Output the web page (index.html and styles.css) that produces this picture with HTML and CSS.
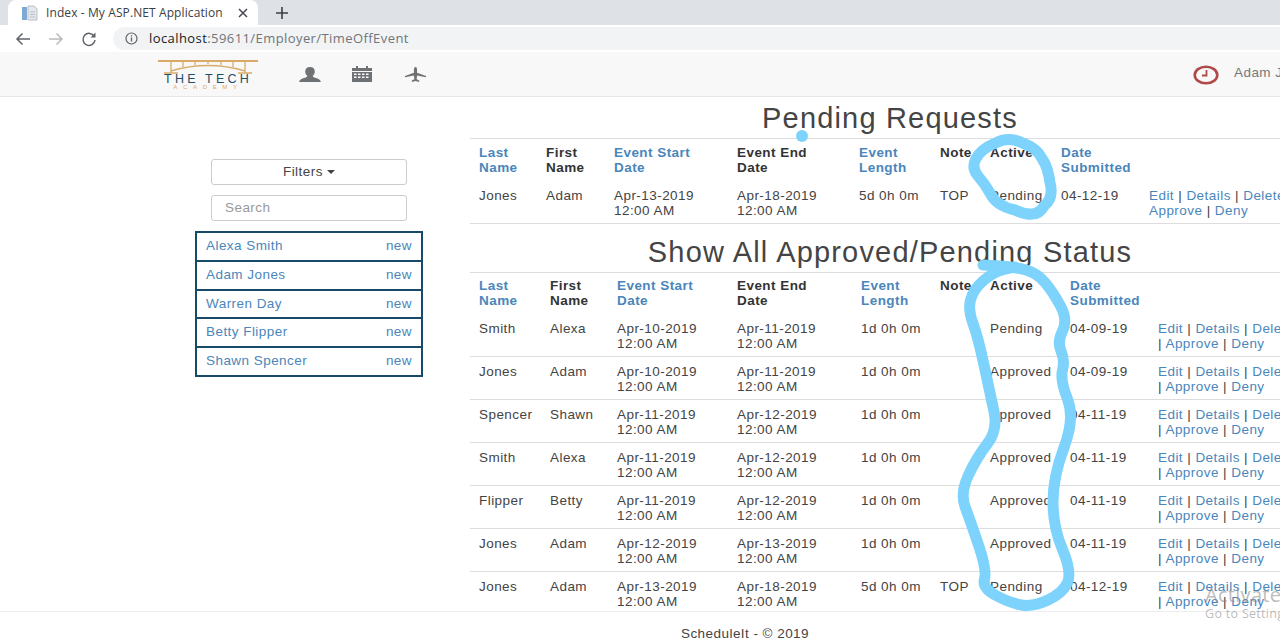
FILE: index.html
```html
<!DOCTYPE html>
<html lang="en">
<head>
  <meta charset="UTF-8">
  <title>Index - My ASP.NET Application</title>
  <link rel="stylesheet" href="styles.css">
</head>
<body>
  <div class="tabstrip">
    <div class="tab">
      <svg class="tab-icon" width="16" height="16" viewBox="0 0 16 16">
        <rect x="0" y="2" width="5" height="13" fill="#7fa9d3"/>
        <path d="M6 1h6l3 3v11H6z" fill="#e4e7ec" stroke="#b9bec6"/>
        <path d="M8 7h5M8 9.500h5M8 12h5" stroke="#b9bec6"/>
      </svg>
      <span class="tab-title">Index - My ASP.NET Application</span>
      <svg class="tab-close" width="10" height="10" viewBox="0 0 10 10">
        <path d="M1 1l8 8M9 1l-8 8" stroke="#45484d" stroke-width="1.500"/>
      </svg>
    </div>
    <svg class="tab-new" width="12" height="12" viewBox="0 0 12 12">
      <path d="M6 0v12M0 6h12" stroke="#3c4043" stroke-width="1.600"/>
    </svg>
  </div>

  <div class="toolbar">
    <svg class="nav-btn" width="16" height="16" viewBox="0 0 16 16">
      <path d="M15 8H2M7.500 2.500L2 8l5.500 5.500" fill="none" stroke="#5f6368" stroke-width="1.500"/>
    </svg>
    <svg class="nav-btn" width="16" height="16" viewBox="0 0 16 16">
      <path d="M1 8h13M8.500 2.500L14 8l-5.500 5.500" fill="none" stroke="#b8babd" stroke-width="1.500"/>
    </svg>
    <svg class="nav-btn" width="16" height="16" viewBox="0 0 16 16">
      <path d="M13.300 5.500A6 6 0 1 0 14 9" fill="none" stroke="#5f6368" stroke-width="1.500"/>
      <path d="M14.500 1.500v5h-5z" fill="#5f6368"/>
    </svg>
    <div class="omnibox">
      <svg class="info-icon" width="13" height="13" viewBox="0 0 13 13">
        <circle cx="6.500" cy="6.500" r="5.500" fill="none" stroke="#5f6368" stroke-width="1.200"/>
        <path d="M6.500 5.500v4M6.500 3.200v1.200" stroke="#5f6368" stroke-width="1.300"/>
      </svg>
      <span class="url"><span class="url-host">localhost</span>:59611/Employer/TimeOffEvent</span>
    </div>
  </div>

  <nav class="navbar">
    <div class="logo">
      <svg class="logo-bridge" width="100" height="14" viewBox="0 0 100 14">
        <path d="M0 1h100" stroke="#d8ab6b" stroke-width="2"/>
        <path d="M13 1v12M25 1v6M37 1v4M50 1v3M63 1v4M75 1v6M87 1v12M6 13h14M80 13h14" stroke="#d8ab6b" stroke-width="1.300" fill="none"/>
        <path d="M13 11Q50 0 87 11" stroke="#d8ab6b" stroke-width="1.600" fill="none"/>
      </svg>
      <div class="logo-name">THE TECH</div>
      <div class="logo-sub">ACADEMY</div>
    </div>
    <svg class="nav-icon icon-user" width="22" height="15" viewBox="0 0 22 17" preserveAspectRatio="none">
      <path d="M11 0c3.200 0 4.800 2.300 4.800 5 0 2.300-1.100 4-2.200 5 .1 1 .7 1.500 2.400 2.100 2.500.8 5.500 1.700 5.800 4.900H.2c.3-3.200 3.300-4.100 5.800-4.900 1.700-.6 2.300-1.100 2.400-2.100C7.300 9 6.200 7.300 6.200 5 6.200 2.300 7.800 0 11 0z" fill="#6f7275"/>
    </svg>
    <svg class="nav-icon icon-cal" width="20" height="16" viewBox="0 0 20 16">
      <path d="M0 2h4V0h2v2h8V0h2v2h4v3H0z" fill="#6f7275"/>
      <path d="M0 6h20v10H0zM2 7.500v1.500h2.500V7.500zM6 7.500v1.500h2.500V7.500zM10 7.500v1.500h2.500V7.500zM14 7.500v1.500h2.500V7.500zM2 10.500V12h2.500v-1.500zM6 10.500V12h2.500v-1.500zM10 10.500V12h2.500v-1.500zM14 10.500V12h2.500v-1.500z" fill="#6f7275" fill-rule="evenodd"/>
    </svg>
    <svg class="nav-icon icon-plane" width="21" height="15" viewBox="0 0 20 16" preserveAspectRatio="none">
      <path d="M10 0c1 0 1.500 1.300 1.500 3v3l8.500 3.500v1.500l-8.500-2-.4 4 2.400 1.500V16L10 15l-3.500 1v-1.500L8.900 13l-.4-4L0 11V9.500L8.500 6V3c0-1.700.5-3 1.500-3z" fill="#6f7275"/>
    </svg>
    <svg class="clock" width="26" height="20" viewBox="0 0 26 20">
      <ellipse cx="13" cy="10" rx="11.300" ry="8.300" fill="none" stroke="#b04a4a" stroke-width="2.600"/>
      <path d="M13.500 5v5.500H9" fill="none" stroke="#b04a4a" stroke-width="1.800"/>
    </svg>
    <span class="user-name">Adam Jones</span>
  </nav>

  <main class="main">
    <aside class="sidebar">
      <button class="filter-btn">Filters <span class="caret"></span></button>
      <input class="search" type="text" placeholder="Search">
      <ul class="people">
        <li><a>Alexa Smith</a><a>new</a></li>
        <li><a>Adam Jones</a><a>new</a></li>
        <li><a>Warren Day</a><a>new</a></li>
        <li><a>Betty Flipper</a><a>new</a></li>
        <li><a>Shawn Spencer</a><a>new</a></li>
      </ul>
    </aside>

    <section class="content">
      <h2 class="title title-first">Pending Requests</h2>
      <table class="grid grid-pending">
        <colgroup>
          <col class="c67"><col class="c68"><col class="c123"><col class="c122"><col class="c81"><col class="c50"><col class="c71"><col class="c88"><col>
        </colgroup>
        <tr>
          <th><a>Last Name</a></th><th>First Name</th><th><a>Event Start Date</a></th><th>Event End<br>Date</th>
          <th><a>Event Length</a></th><th>Note</th><th>Active</th><th><a>Date Submitted</a></th><th></th>
        </tr>
        <tr>
          <td>Jones</td><td>Adam</td><td>Apr-13-2019<br>12:00 AM</td><td>Apr-18-2019<br>12:00 AM</td>
          <td>5d 0h 0m</td><td>TOP</td><td>Pending</td><td>04-12-19</td>
          <td><a>Edit</a> | <a>Details</a> | <a>Delete</a> |<br><a>Approve</a> | <a>Deny</a></td>
        </tr>
      </table>

      <h2 class="title">Show All Approved/Pending Status</h2>
      <table class="grid grid-all">
        <colgroup>
          <col class="c71"><col class="c67"><col class="c120"><col class="c124"><col class="c79"><col class="c50"><col class="c80"><col class="c88"><col>
        </colgroup>
        <tr>
          <th><a>Last Name</a></th><th>First Name</th><th><a>Event Start Date</a></th><th>Event End<br>Date</th>
          <th><a>Event Length</a></th><th>Note</th><th>Active</th><th><a>Date Submitted</a></th><th></th>
        </tr>
        <tr>
          <td>Smith</td><td>Alexa</td><td>Apr-10-2019<br>12:00 AM</td><td>Apr-11-2019<br>12:00 AM</td>
          <td>1d 0h 0m</td><td></td><td>Pending</td><td>04-09-19</td>
          <td><a>Edit</a> | <a>Details</a> | <a>Delete</a><br>| <a>Approve</a> | <a>Deny</a></td>
        </tr>
        <tr>
          <td>Jones</td><td>Adam</td><td>Apr-10-2019<br>12:00 AM</td><td>Apr-11-2019<br>12:00 AM</td>
          <td>1d 0h 0m</td><td></td><td>Approved</td><td>04-09-19</td>
          <td><a>Edit</a> | <a>Details</a> | <a>Delete</a><br>| <a>Approve</a> | <a>Deny</a></td>
        </tr>
        <tr>
          <td>Spencer</td><td>Shawn</td><td>Apr-11-2019<br>12:00 AM</td><td>Apr-12-2019<br>12:00 AM</td>
          <td>1d 0h 0m</td><td></td><td>Approved</td><td>04-11-19</td>
          <td><a>Edit</a> | <a>Details</a> | <a>Delete</a><br>| <a>Approve</a> | <a>Deny</a></td>
        </tr>
        <tr>
          <td>Smith</td><td>Alexa</td><td>Apr-11-2019<br>12:00 AM</td><td>Apr-12-2019<br>12:00 AM</td>
          <td>1d 0h 0m</td><td></td><td>Approved</td><td>04-11-19</td>
          <td><a>Edit</a> | <a>Details</a> | <a>Delete</a><br>| <a>Approve</a> | <a>Deny</a></td>
        </tr>
        <tr>
          <td>Flipper</td><td>Betty</td><td>Apr-11-2019<br>12:00 AM</td><td>Apr-12-2019<br>12:00 AM</td>
          <td>1d 0h 0m</td><td></td><td>Approved</td><td>04-11-19</td>
          <td><a>Edit</a> | <a>Details</a> | <a>Delete</a><br>| <a>Approve</a> | <a>Deny</a></td>
        </tr>
        <tr>
          <td>Jones</td><td>Adam</td><td>Apr-12-2019<br>12:00 AM</td><td>Apr-13-2019<br>12:00 AM</td>
          <td>1d 0h 0m</td><td></td><td>Approved</td><td>04-11-19</td>
          <td><a>Edit</a> | <a>Details</a> | <a>Delete</a><br>| <a>Approve</a> | <a>Deny</a></td>
        </tr>
        <tr>
          <td>Jones</td><td>Adam</td><td>Apr-13-2019<br>12:00 AM</td><td>Apr-18-2019<br>12:00 AM</td>
          <td>5d 0h 0m</td><td>TOP</td><td>Pending</td><td>04-12-19</td>
          <td><a>Edit</a> | <a>Details</a> | <a>Delete</a><br>| <a>Approve</a> | <a>Deny</a></td>
        </tr>
      </table>
    </section>
  </main>

  <footer class="footer">ScheduleIt - © 2019</footer>

  <!-- marker drawn over the screenshot -->
  <svg class="scribble" width="1280" height="640" viewBox="0 0 1280 640">
    <circle cx="802" cy="136" r="6" fill="#7dd3fc"/>
    <path class="stroke" d="M995.500 143Q981 149 976 158.500Q971 168 978 176Q985 184 990 193Q996 206 1015 210Q1037 220 1044 206Q1054 198 1050 182.500Q1048 167 1042 158.500Q1037 148 1022.500 143Q1008 136 995.500 143"/>
    <path class="stroke" d="M983 265L999 266Q1015 267 1026 270Q1037 273 1045 282.500Q1053 292 1060.500 306Q1068 320 1062.500 331Q1057 342 1061 351Q1065 360 1062.500 370Q1060 380 1067.500 399Q1075 418 1064 447.500Q1053 477 1053 502Q1053 527 1062.500 549.500Q1072 572 1067.500 582.500Q1063 593 1048 600Q1033 607 1021.500 605Q1010 603 996 595.500Q982 588 984.500 579Q987 570 978.500 545Q970 520 965 506.500Q960 493 968.500 475Q977 457 987.500 443.500Q998 430 994 411.500Q990 393 984 365Q978 337 973 323.500Q968 310 970.500 300Q973 290 983 281Q993 272 1004 269.500L1015 267"/>
  </svg>

  <div class="watermark">
    <div class="wm-big">Activate Windows</div>
    <div class="wm-small">Go to Settings to activate Windows.</div>
  </div>
</body>
</html>
```

FILE: styles.css
```css
html, body { margin: 0; height: 640px; overflow: hidden; }
body {
  position: relative;
  width: 1280px;
  background: #fff;
  color: #444;
  font-family: "Liberation Sans", Arial, sans-serif;
  font-size: 13.5px;
  line-height: 15px;
  letter-spacing: .45px;
}
a { color: #4a86bb; }

/* browser chrome */
.tabstrip {
  display: flex;
  align-items: center;
  height: 25px;
  background: #dee1e6;
}
.tab {
  display: flex;
  align-items: center;
  flex: none;
  width: 250px;
  height: 25px;
  margin-left: 8px;
  background: #fff;
  border-radius: 8px 8px 0 0;
  box-sizing: border-box;
  padding: 0 10px 0 14px;
}
.tab-icon { flex: none; }
.tab-title {
  margin-left: 8px;
  color: #3c4043;
  font-family: "Open Sans", sans-serif;
  font-size: 12px;
  letter-spacing: .1px;
  white-space: nowrap;
}
.tab-close { flex: none; margin-left: auto; }
.tab-new { flex: none; margin-left: 18px; }
.toolbar {
  display: flex;
  align-items: center;
  height: 27px;
  background: #fff;
  padding-left: 15px;
}
.nav-btn { flex: none; margin-right: 17px; }
.omnibox {
  display: flex;
  align-items: center;
  flex: 1;
  height: 23px;
  margin-left: -1px;
  padding-left: 12px;
  background: #f1f3f4;
  border-radius: 12px 0 0 12px;
}
.url {
  margin-left: 11px;
  color: #70757a;
  font-family: "Open Sans", sans-serif;
  font-size: 13px;
  letter-spacing: .42px;
}
.url-host { color: #202124; }

/* site navbar */
.navbar {
  display: flex;
  align-items: center;
  height: 44px;
  background: #f8f8f8;
  border-bottom: 1px solid #e7e7e7;
  padding-left: 158px;
}
.logo { flex: none; width: 100px; margin-top: 3px; text-align: center; }
.logo-bridge { display: block; }
.logo-name {
  color: #1d4f6b;
  font-size: 12.500px;
  line-height: 11px;
  letter-spacing: 3.200px;
  white-space: nowrap;
}
.logo-sub {
  margin-top: -1px;
  color: #d8ab6b;
  font-size: 6px;
  line-height: 7px;
  letter-spacing: 5.700px;
}
.nav-icon { flex: none; margin-top: 0; }
.icon-user { margin-left: 41px; }
.icon-cal { margin-left: 31px; }
.icon-plane { margin-left: 33px; }
.clock { flex: none; margin-left: 767px; margin-top: 2px; }
.user-name {
  margin-left: 15px;
  margin-top: -4px;
  color: #777;
  white-space: nowrap;
}

/* page */
.main { display: flex; height: 514px; overflow: hidden; }
.sidebar {
  box-sizing: border-box;
  flex: 0 0 470px;
  padding: 62px 47px 0 195px;
}
.filter-btn, .search {
  display: block;
  box-sizing: border-box;
  width: 196px;
  height: 26px;
  margin: 0 16px 10px;
  background: #fff;
  border: 1px solid #ccc;
  border-radius: 3px;
  font: inherit;
  letter-spacing: inherit;
}
.filter-btn { color: #444; padding: 0 0 2px; }
.search { padding: 0 13px 2px; }
.search::placeholder { color: #999; }
.caret {
  display: inline-block;
  vertical-align: middle;
  border-top: 4px solid #444;
  border-left: 4px solid transparent;
  border-right: 4px solid transparent;
}
.people {
  margin: 0;
  padding: 0;
  list-style: none;
  border: 2px solid #164a68;
  border-bottom: 0;
}
.people li {
  display: flex;
  justify-content: space-between;
  height: 28.750px;
  padding: 5px 9px 0;
  box-sizing: border-box;
  border-bottom: 2px solid #164a68;
}

.content { flex: 0 0 840px; }
.title {
  margin: 0;
  padding-top: 8px;
  height: 39px;
  box-sizing: border-box;
  font-size: 29px;
  font-weight: 400;
  line-height: 26px;
  letter-spacing: 1.180px;
  text-align: center;
}
.title-first { height: 41px; padding-top: 8px; }
.grid + .title { height: 48px; padding-top: 15px; }
.grid {
  width: 840px;
  table-layout: fixed;
  border-collapse: collapse;
  border-top: 1px solid #ddd;
}
.c50 { width: 50px; }
.c67 { width: 67px; }
.c68 { width: 68px; }
.c71 { width: 71px; }
.c79 { width: 79px; }
.c80 { width: 80px; }
.c81 { width: 81px; }
.c88 { width: 88px; }
.c120 { width: 120px; }
.c122 { width: 122px; }
.c123 { width: 123px; }
.c124 { width: 124px; }
.grid th {
  padding: 6px 9px 5px;
  color: #333;
  font-weight: 700;
  text-align: left;
  vertical-align: top;
}
.grid td {
  padding: 7px 9px 5px;
  vertical-align: top;
  border-bottom: 1px solid #ddd;
  white-space: nowrap;
}
.grid-pending td { padding-top: 8px; }
.grid-all th { padding: 5px 9px 6px; }

.footer {
  box-sizing: border-box;
  height: 29px;
  padding: 14px 0 0 210px;
  border-top: 1px solid #eee;
  text-align: center;
}

/* overlays */
.scribble { position: absolute; left: 0; top: 0; pointer-events: none; }
.stroke {
  fill: none;
  stroke: #7dd3fc;
  stroke-width: 11;
  stroke-linecap: round;
  stroke-linejoin: round;
}
.watermark {
  position: absolute;
  left: 1205px;
  top: 584px;
  width: 300px;
  color: rgba(130, 130, 130, .55);
  font-family: "Open Sans", sans-serif;
  letter-spacing: .3px;
}
.wm-big { font-size: 20px; line-height: 22px; }
.wm-small { font-size: 12.500px; line-height: 15px; }
```
